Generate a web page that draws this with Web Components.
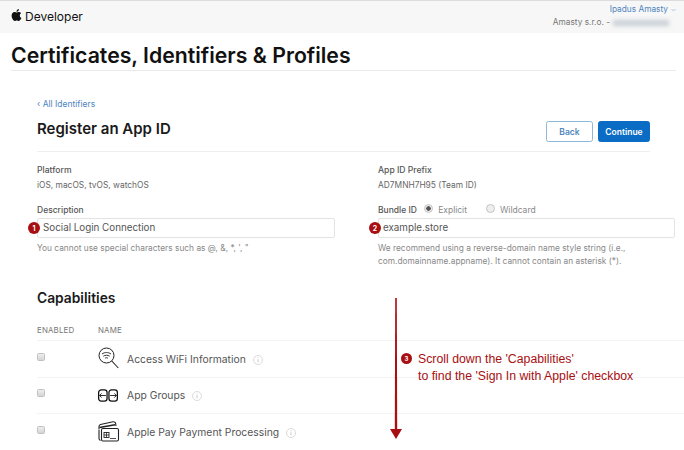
<!DOCTYPE html>
<html>
<head>
<meta charset="utf-8">
<style>
  html, body { margin: 0; padding: 0; background: #fff; overflow: hidden; height: 450px; }
  body { font-family: Inter, "Liberation Sans", sans-serif; color: #333; position: relative; }
</style>
</head>
<body>
<dev-header></dev-header>
<page-title>Certificates, Identifiers &amp; Profiles</page-title>
<register-form></register-form>
<scroll-note></scroll-note>

<script>
class DevHeader extends HTMLElement {
  constructor() {
    super();
    this.attachShadow({ mode: "open" });
  }
  connectedCallback() {
    this.shadowRoot.innerHTML = `
      <style>
        :host { display: flex; justify-content: space-between; height: 32px; background: #f7f7f7; border-top: 1px solid #dcdcdc; padding: 0 8px 0 11px; }
        .logo { display: flex; align-items: center; gap: 2px; font-size: 12px; color: #111; height: 30px; }
        svg.apple { width: 12px; height: 14px; margin-bottom: 3px; }
        .user { text-align: right; font-size: 8.3px; line-height: 13px; padding-top: 2px; }
        .name { color: #4f86c0; display: flex; justify-content: flex-end; align-items: center; gap: 3px; }
        .team { color: #777; display: flex; justify-content: flex-end; align-items: center; gap: 3px; }
        .blur { width: 56px; height: 6px; background: #c9d0d6; filter: blur(2px); margin-right: 7px; }
      </style>
      <div class="logo">
        <svg class="apple" viewBox="0 0 24 28"><path fill="#111" d="M17.6 14.9c0-3 2.500-4.500 2.600-4.600-1.400-2.100-3.600-2.400-4.400-2.400-1.900-.2-3.600 1.100-4.600 1.100-.9 0-2.400-1.100-4-1.100-2 0-3.900 1.200-5 3-2.100 3.700-.5 9.200 1.500 12.200 1 1.500 2.200 3.100 3.800 3 1.500-.1 2.100-1 3.900-1 1.800 0 2.400 1 4 1 1.700 0 2.700-1.500 3.700-2.900 1.200-1.700 1.700-3.300 1.700-3.400-.1 0-3.200-1.200-3.200-4.900zM14.600 5.900c.8-1 1.400-2.400 1.200-3.900-1.200.1-2.700.8-3.600 1.800-.8.9-1.500 2.400-1.300 3.800 1.400.1 2.800-.7 3.700-1.700z"/></svg>
        <span>Developer</span>
      </div>
      <div class="user">
        <div class="name">Ipadus Amasty <svg width="5" height="4" viewBox="0 0 5 4"><path d="M.5 1l2 2 2-2" fill="none" stroke="#9db8d6" stroke-width=".8"/></svg></div>
        <div class="team">Amasty s.r.o. - <span class="blur"></span></div>
      </div>
    `;
  }
}
customElements.define("dev-header", DevHeader);

class PageTitle extends HTMLElement {
  constructor() {
    super();
    this.attachShadow({ mode: "open" });
  }
  connectedCallback() {
    this.shadowRoot.innerHTML = `
      <style>
        :host { display: block; margin: 0 8px 0 11px; height: 37px; border-bottom: 1px solid #eaeaea; font-size: 21.25px; font-weight: 600; color: #111; line-height: 44px; white-space: nowrap; }
      </style>
      <slot></slot>
    `;
  }
}
customElements.define("page-title", PageTitle);

class NumBadge extends HTMLElement {
  constructor() {
    super();
    this.attachShadow({ mode: "open" });
  }
  connectedCallback() {
    this.shadowRoot.innerHTML = `
      <style>
        :host { display: flex; align-items: center; justify-content: center; width: 12px; height: 12px; border-radius: 50%; background: #a80f12; color: #fff; font-size: 7px; font-weight: 700; line-height: 1; }
      </style>
      <slot></slot>
    `;
  }
}
customElements.define("num-badge", NumBadge);

class FormField extends HTMLElement {
  constructor() {
    super();
    this.attachShadow({ mode: "open" });
  }
  connectedCallback() {
    const num = this.getAttribute("num");
    const value = this.getAttribute("value");
    this.shadowRoot.innerHTML = `
      <style>
        :host { display: block; }
        .label { font-size: 8.5px; font-weight: 500; color: #555; line-height: 12px; height: 12px; display: flex; align-items: center; }
        .box { position: relative; margin-top: 2px; height: 20px; box-sizing: border-box; border: 1px solid #e3e3e3; border-radius: 2px; font-size: 9.8px; color: #555; line-height: 18px; padding-left: var(--pad, 5px); }
        num-badge { position: absolute; left: -10px; top: 3px; }
        .hint { margin-top: 4px; font-size: 8.3px; line-height: 13px; color: #888; letter-spacing: .003em; }
      </style>
      <div class="label"><slot name="label"></slot></div>
      <div class="box"><num-badge>${num}</num-badge>${value}</div>
      <div class="hint"><slot></slot></div>
    `;
  }
}
customElements.define("form-field", FormField);

class InfoPair extends HTMLElement {
  constructor() {
    super();
    this.attachShadow({ mode: "open" });
  }
  connectedCallback() {
    this.shadowRoot.innerHTML = `
      <style>
        :host { display: block; height: 41px; }
        .k { font-size: 8.6px; font-weight: 500; color: #555; line-height: 14px; }
        .v { font-size: 8.4px; color: #666; line-height: 14px; margin-top: 1px; }
      </style>
      <div class="k">${this.getAttribute("label")}</div>
      <div class="v"><slot></slot></div>
    `;
  }
}
customElements.define("info-pair", InfoPair);

class CapRow extends HTMLElement {
  constructor() {
    super();
    this.attachShadow({ mode: "open" });
  }
  connectedCallback() {
    this.shadowRoot.innerHTML = `
      <style>
        :host { display: grid; grid-template-columns: 61px 29px auto 1fr; align-items: center; height: 36.5px; box-sizing: border-box; border-top: 1px solid #f3f3f3; }
        .check { width: 6px; height: 6px; margin-top: -4px; border: 1px solid #c0c0c0; border-radius: 1.5px; background: linear-gradient(#eee, #d4d4d4); }
        .ico { display: flex; align-items: center; justify-content: flex-start; }
        .name { font-size: 10.35px; color: #555; }
        svg { overflow: visible; }
        .info { width: 10px; height: 10px; margin-left: 7px; margin-top: 2px; }
      </style>
      <div class="check"></div>
      <div class="ico"><slot name="icon"></slot></div>
      <div class="name"><slot></slot></div>
      <svg class="info" viewBox="0 0 10 10"><circle cx="5" cy="5" r="4.500" fill="none" stroke="#d0d0d0" stroke-width=".8"/><path d="M5 4.300v3M5 2.400v.9" stroke="#c4c4c4" stroke-width=".9"/></svg>
    `;
  }
}
customElements.define("cap-row", CapRow);

class RegisterForm extends HTMLElement {
  constructor() {
    super();
    this.attachShadow({ mode: "open" });
  }
  connectedCallback() {
    this.shadowRoot.innerHTML = `
      <style>
        :host { display: block; padding: 27px 0 0 37px; }
        a { font-size: 8.5px; color: #4f86c0; line-height: 12px; display: block; }
        .head { display: flex; justify-content: space-between; align-items: flex-start; width: 613px; height: 35px; border-bottom: 1px solid #eee; margin-top: 6px; }
        h2 { margin: 0; font-size: 15px; font-weight: 600; color: #1a1a1a; line-height: 24px; margin-top: 1px; }
        .btns { display: flex; gap: 5px; margin-top: 5px; }
        button { font: 600 8.5px Inter, sans-serif; width: 47px; height: 21px; border-radius: 2.5px; padding: 0; box-sizing: border-box; }
        .back { background: #fff; color: #4f86c0; border: 1px solid #8db8d8; }
        .cont { background: #0a6cc4; color: #fff; border: 1px solid #0a6cc4; width: 52px; }
        .cols { display: grid; grid-template-columns: 298px 297px; column-gap: 43px; margin-top: 11px; }
        .radio { display: inline-flex; align-items: center; gap: 5px; margin-left: 5px; color: #888; font-weight: 400; font-size: 8.500px; }
        .radio + .radio { margin-left: 19px; }
        .dot { width: 7px; height: 7px; border-radius: 50%; border: 1px solid #c4c4c4; background: #eee; margin-top: -3px; display: inline-block; }
        .dot.on { background: radial-gradient(circle, #555 0 2px, #eee 2.500px); }
        h3 { margin: 21px 0 0; font-size: 13.8px; font-weight: 600; color: #1a1a1a; line-height: 18px; }
        .thead { display: grid; grid-template-columns: 61px auto 1fr; font-size: 7.900px; color: #777; margin-top: 17px; height: 16px; line-height: 12px; letter-spacing: .02em; }
        .rows { width: 647px; }
        svg { display: block; overflow: visible; }
      </style>
      <a>&#8249; All Identifiers</a>
      <div class="head">
        <h2>Register an App ID</h2>
        <div class="btns"><button class="back">Back</button><button class="cont">Continue</button></div>
      </div>
      <div class="cols">
        <div>
          <info-pair label="Platform">iOS, macOS, tvOS, watchOS</info-pair>
          <form-field num="1" value="Social Login Connection">
            <span slot="label">Description</span>
            You cannot use special characters such as @, &amp;, *, ', "
          </form-field>
        </div>
        <div>
          <info-pair label="App ID Prefix">AD7MNH7H95 (Team ID)</info-pair>
          <form-field num="2" value="example.store" style="--pad:4px">
            <span slot="label">Bundle ID <span class="radio"><i class="dot on"></i>Explicit</span><span class="radio"><i class="dot"></i>Wildcard</span></span>
            We recommend using a reverse-domain name style string (i.e.,<br>com.domainname.appname). It cannot contain an asterisk (*).
          </form-field>
        </div>
      </div>
      <h3>Capabilities</h3>
      <div class="thead"><span>ENABLED</span><span>NAME</span></div>
      <div class="rows">
        <cap-row>
          <svg slot="icon" width="21" height="21" viewBox="0 0 21 21"><circle cx="8.500" cy="7.500" r="7.500" fill="none" stroke="#222" stroke-width="1"/><path d="M13.800 13l6.500 7" stroke="#222" stroke-width="1.100"/><path d="M4 6c2.800-2 6.200-2 9 0M5.300 8.200c2-1.300 4.400-1.300 6.400 0M7 10.200c1-.6 2-.6 3 0" fill="none" stroke="#333" stroke-width="1"/></svg>
          Access WiFi Information
        </cap-row>
        <cap-row>
          <svg slot="icon" width="20" height="13" viewBox="0 0 19 12"><rect x=".6" y=".6" width="8" height="10.800" rx="2.500" fill="none" stroke="#111" stroke-width="1.200"/><rect x="10.400" y=".6" width="8" height="10.800" rx="2.500" fill="none" stroke="#111" stroke-width="1.200"/><path d="M1.500 6h6M3.500 4L1.500 6l2 2M11.500 6h6M15.500 4l2 2-2 2" fill="none" stroke="#222" stroke-width=".9"/></svg>
          App Groups
        </cap-row>
        <cap-row>
          <svg slot="icon" width="21" height="21" viewBox="0 0 21 21"><path d="M1 8L1 5.500Q1 4 2.500 3.500L15 .7Q17 .5 17.500 2L18 5" fill="none" stroke="#222" stroke-width="1.100"/><path d="M1.500 6.500L17 3.800" stroke="#222" stroke-width="1.600"/><path d="M2.500 19.500Q1 19 1 17.500V8.500" fill="none" stroke="#222" stroke-width="1.100"/><rect x="3.500" y="7.500" width="17" height="12.500" rx="1.500" fill="#fff" stroke="#222" stroke-width="1.100"/><rect x="6" y="11.500" width="5" height="5" fill="none" stroke="#222" stroke-width=".9"/><path d="M6 14h5M8.500 11.500v5M12 17.500h6" stroke="#222" stroke-width=".8"/></svg>
          Apple Pay Payment Processing
        </cap-row>
      </div>
    `;
  }
}
customElements.define("register-form", RegisterForm);

class ScrollNote extends HTMLElement {
  constructor() {
    super();
    this.attachShadow({ mode: "open" });
  }
  connectedCallback() {
    this.shadowRoot.innerHTML = `
      <style>
        :host { position: absolute; left: 389px; top: 297px; width: 260px; height: 145px; display: block; color: #a80f12; }
        svg { position: absolute; left: 0; top: 0; }
        .note { position: absolute; left: 12px; top: 54px; display: flex; gap: 6px; font: 12.3px/16.500px "Liberation Sans", Arial, sans-serif; white-space: nowrap; }
        num-badge { margin-top: 2px; width: 11px; height: 11px; font-family: Inter, sans-serif; font-size: 6px; }
      </style>
      <svg width="14" height="145" viewBox="0 0 14 145"><path d="M6.200 1h1.600l.4 133H5.800z" fill="#b00d10"/><path d="M1 132h12l-6 10z" fill="#a80f12"/></svg>
      <div class="note">
        <num-badge>3</num-badge>
        <div>Scroll down the 'Capabilities'<br>to find the 'Sign In with Apple' checkbox</div>
      </div>
    `;
  }
}
customElements.define("scroll-note", ScrollNote);
</script>
</body>
</html>
